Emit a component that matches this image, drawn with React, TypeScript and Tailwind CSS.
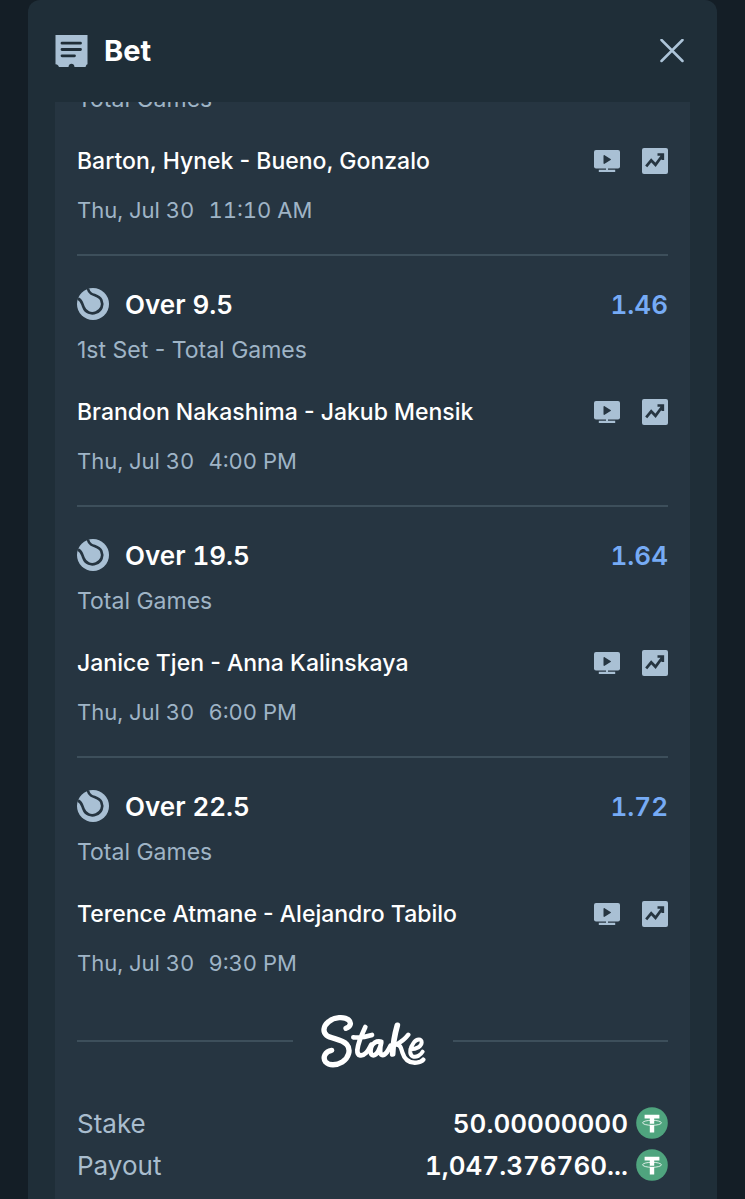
import React from "react";

type Leg = {
  pick?: string;
  odds?: string;
  market: string;
  match: string;
  day: string;
  time: string;
};

const legs: Leg[] = [
  { market: "Total Games", match: "Barton, Hynek - Bueno, Gonzalo", day: "Thu, Jul 30", time: "11:10 AM" },
  { pick: "Over 9.5", odds: "1.46", market: "1st Set - Total Games", match: "Brandon Nakashima - Jakub Mensik", day: "Thu, Jul 30", time: "4:00 PM" },
  { pick: "Over 19.5", odds: "1.64", market: "Total Games", match: "Janice Tjen - Anna Kalinskaya", day: "Thu, Jul 30", time: "6:00 PM" },
  { pick: "Over 22.5", odds: "1.72", market: "Total Games", match: "Terence Atmane - Alejandro Tabilo", day: "Thu, Jul 30", time: "9:30 PM" },
];

function TicketIcon() {
  return (
    <svg viewBox="0 0 33 33" className="size-[33px] shrink-0" aria-hidden="true">
      <path
        fill="#a9c0d4"
        d="M.5 0h32v29.200c-1 .3-1.700 1.200-1.900 2.800H19.500c-.2-2-1.400-3.200-3-3.200s-2.800 1.200-3 3.200H3.900C3.600 30.400 2.700 29.500.5 29.200z"
      />
      <path d="M7 8.200h18.500M7 14.500h18.500M7 20.800h12.500" stroke="#1f2e38" strokeWidth="2.800" strokeLinecap="round" />
    </svg>
  );
}

function CloseIcon() {
  return (
    <svg viewBox="0 0 24 24" className="size-6" aria-hidden="true">
      <path d="M1.500 1l21 21M22.500 1l-21 21" stroke="#adc4d8" strokeWidth="2.500" strokeLinecap="round" />
    </svg>
  );
}

function TennisIcon() {
  return (
    <svg viewBox="0 0 32 32" className="size-8 shrink-0" aria-hidden="true">
      <circle cx="16" cy="16" r="16" fill="#a9c0d4" />
      <path
        d="M1 10.500C5 12.300 5 15.500 6.500 19c2 5.500 7.500 7.500 12.500 5.500 5.500-2 7.500-7.500 5.300-12.500-2-4.500-7.300-4.500-10.300-6.500-1.600-1.100-2.500-2.500-3.200-5"
        fill="none"
        stroke="#263541"
        strokeWidth="2.700"
      />
    </svg>
  );
}

function StreamIcon() {
  return (
    <svg viewBox="0 0 26 26" className="size-[26px]" aria-hidden="true">
      <rect y="2" width="26" height="18.500" rx="2" fill="#a9c0d4" />
      <path d="M12 20h2v1.800h7.200v2.200H4.800v-2.200H12z" fill="#a9c0d4" />
      <path d="M9.500 7.800v7.400c0 .6.600.9 1.100.6l6-3.800c.5-.3.500-.8 0-1.100l-6-3.700c-.5-.3-1.100 0-1.100.6z" fill="#263541" />
    </svg>
  );
}

function StatsIcon() {
  return (
    <svg viewBox="0 0 26 26" className="size-[26px]" aria-hidden="true">
      <rect width="26" height="26" rx="2" fill="#a9c0d4" />
      <path d="M4.200 18.300l5-6 4.300 4.500 7-9.500M15.500 6.500h5.300v5.500" fill="none" stroke="#263541" strokeWidth="2.700" />
    </svg>
  );
}

function TetherIcon() {
  return (
    <svg viewBox="0 0 32 32" className="size-8 shrink-0" aria-hidden="true">
      <circle cx="16" cy="16" r="15.800" fill="#4fa47e" />
      <ellipse cx="16" cy="15.800" rx="9.400" ry="2.500" fill="none" stroke="#fff" strokeWidth=".8" />
      <path d="M8.600 7.800h14.800v3.800h-5.200v5.200h-4.400v-5.200H8.600zM13.800 18h4.400v7.500h-4.400z" fill="#fff" />
    </svg>
  );
}

function StakeLogo() {
  return (
    <svg viewBox="0 0 318 162" className="h-[54px] w-[106px] shrink-0" role="img" aria-label="Stake">
      <g transform="translate(-59 -40)" fill="none" stroke="#fff" strokeLinecap="round" strokeLinejoin="round">
        <path
          strokeWidth="16"
          d="M137 83c14-5 17-17 8-25-13-11-44-9-60 5-17 14-18 31-6 41 14 11 44 10 60 27 14 16 6 41-13 53-18 11-40 11-50 0-10-13-2-32 18-35"
        />
        <path strokeWidth="14" d="M195 79c-10 21-22 48-24 69-1 20 15 20 27 8 7-7 11-17 15-24M159 110c20 2 38-1 56-7" />
        <path strokeWidth="14" d="M243 123c-14-4-27 4-31 18-3 12-1 23 7 23 11 0 21-21 24-39-4 14-6 36 2 38 11 2 19-14 26-28" />
        <path strokeWidth="17" d="M291 74c-8 28-13 56-14 86" />
        <path strokeWidth="13" d="M324 102c-9 12-21 22-37 30 13 0 15 9 19 23 7 23 23 33 43 31 10-1 16-4 20-9" />
        <path strokeWidth="12" d="M330 146c20 0 34-10 34-21 0-12-15-11-24 1-11 14-15 36-3 41 11 4 24-3 30-14" />
      </g>
    </svg>
  );
}

function LegRow({ leg }: { leg: Leg }) {
  return (
    <li className="border-t-2 border-[#3d4f5b] pb-7 first:border-t-0">
      {leg.pick && (
        <div className="mt-[28px] mb-[10px] flex h-10 items-center">
          <TennisIcon />
          <h2 className="ml-4 flex-1 text-[26px] font-semibold text-white tabular-nums">{leg.pick}</h2>
          <span className="text-[26px] font-semibold text-[#76abf5] tabular-nums">{leg.odds}</span>
        </div>
      )}
      <p className="text-[23px] leading-8 text-[#9fb4c6]">{leg.market}</p>
      <div className="mt-[30px] mb-[17px] flex h-8 items-center justify-between">
        <h3 className="text-[23px] font-medium text-white">{leg.match}</h3>
        <div className="flex gap-[22px]">
          <button type="button" aria-label="Watch live stream"><StreamIcon /></button>
          <button type="button" aria-label="Match statistics"><StatsIcon /></button>
        </div>
      </div>
      <p className="flex gap-[14px] text-[22px] leading-8 text-[#9fb4c6] tabular-nums">
        <span>{leg.day}</span>
        <span>{leg.time}</span>
      </p>
    </li>
  );
}

function TotalRow({ label, value }: { label: string; value: string }) {
  return (
    <div className="flex h-[42px] items-center">
      <dt className="flex-1 text-[26px] text-[#a9bdce]">{label}</dt>
      <dd className="flex items-center gap-2 text-[26px] font-semibold text-white tabular-nums">
        {value}
        <TetherIcon />
      </dd>
    </div>
  );
}

export default function App() {
  return (
    <div className="min-h-screen bg-[#141e26] px-7 font-['Inter','Noto_Sans',sans-serif]">
      <main className="flex min-h-screen flex-col rounded-t-xl bg-[#1f2e38] px-[27px]">
        <header className="flex h-[102px] items-center">
          <TicketIcon />
          <h1 className="ml-4 flex-1 text-[29px] font-bold text-white">Bet</h1>
          <button type="button" aria-label="Close" className="mr-[6px]"><CloseIcon /></button>
        </header>
        <section className="flex-1 overflow-hidden bg-[#263541] px-[22px]">
          <ul className="-mt-[19px]">
            {legs.map((leg) => (
              <LegRow key={leg.match} leg={leg} />
            ))}
          </ul>
          <div className="mt-[7px] flex items-center gap-[27px]">
            <span className="h-0.5 flex-1 bg-[#3d4f5b]" />
            <StakeLogo />
            <span className="h-0.5 flex-1 bg-[#3d4f5b]" />
          </div>
          <dl className="mt-[34px]">
            <TotalRow label="Stake" value="50.00000000" />
            <TotalRow label="Payout" value="1,047.376760..." />
          </dl>
        </section>
      </main>
    </div>
  );
}
